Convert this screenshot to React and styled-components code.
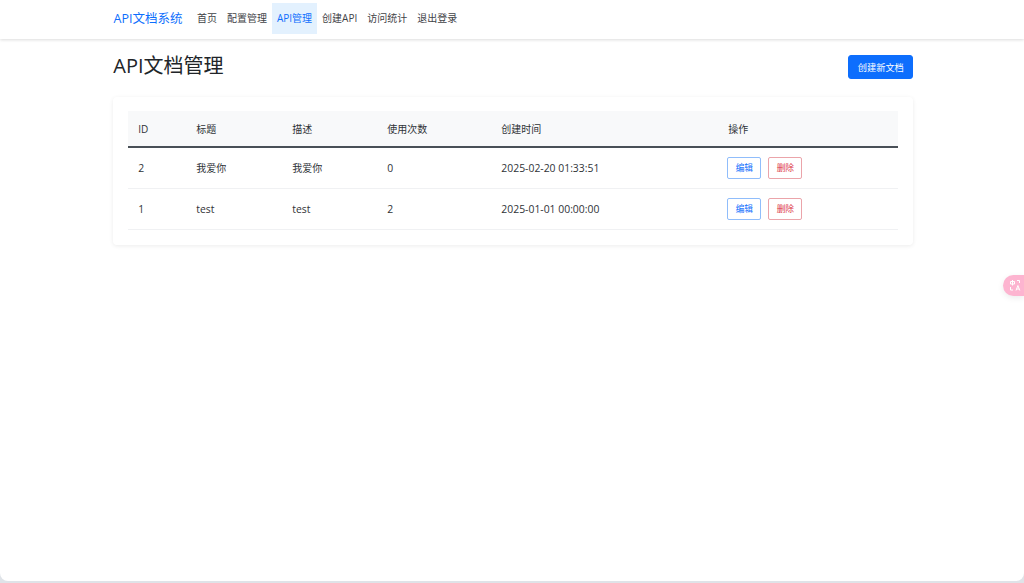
import React from "react";
import styled, { createGlobalStyle } from "styled-components";

const Global = createGlobalStyle`
  html, body { margin: 0; padding: 0; height: 100%; background: #dfe3e8; }
  body {
    font-family: "Open Sans", "Noto Sans CJK SC", sans-serif;
    font-size: 10px;
    color: #2f3337;
    overflow: hidden;
  }
  #root { height: 100%; }
`;

const Page = styled.div`
  position: relative;
  height: 581px;
  background: #fff;
  border-radius: 0 0 8px 8px;
  overflow: hidden;
`;

const NavBar = styled.nav`
  height: 39px;
  padding: 3px 0 0 113.5px;
  box-sizing: border-box;
  display: flex;
  align-items: flex-start;
  background: #fff;
  box-shadow: 0 1px 3px rgba(0, 0, 0, 0.14);
`;

const Brand = styled.a`
  font-size: 12.5px;
  line-height: 32px;
  color: #0d6efd;
  margin-right: 9.5px;
`;

const NavLink = styled.a`
  height: 31px;
  line-height: 31px;
  padding: 0 5px;
  color: ${(p) => (p.$active ? "#0d6efd" : "#3f4347")};
  background: ${(p) => (p.$active ? "#e3f1fe" : "transparent")};
`;

const Main = styled.main`
  width: 800px;
  margin-left: 113.33px;
`;

const Header = styled.div`
  display: flex;
  justify-content: space-between;
  align-items: flex-start;
  padding-top: 16px;
  height: 58px;
  box-sizing: border-box;
`;

const Title = styled.h1`
  margin: -3px 0 0;
  font-size: 20px;
  font-weight: 400;
  line-height: 28px;
  color: #212529;
`;

const PrimaryButton = styled.button`
  width: 65px;
  height: 24px;
  padding: 0;
  border: 1px solid #0d6efd;
  border-radius: 3px;
  background: #0d6efd;
  color: #fff;
  font: inherit;
  font-size: 9.2px;
`;

const Card = styled.section`
  height: 148px;
  box-sizing: border-box;
  padding: 14px 15px;
  border-radius: 4px;
  background: #fff;
  box-shadow: 0 1px 4px rgba(0, 0, 0, 0.08);
`;

const Table = styled.table`
  width: 770px;
  border-collapse: collapse;
  table-layout: fixed;
`;

const Th = styled.th`
  width: ${(p) => p.$w}px;
  height: 36px;
  padding: 0 10px;
  box-sizing: border-box;
  background: #f8f9fa;
  border-bottom: 2px solid #495057;
  font-weight: 400;
  text-align: left;
`;

const Td = styled.td`
  height: 41px;
  padding: 0 10px;
  box-sizing: border-box;
  border-bottom: 1px solid #f0f1f3;
  font-size: ${(p) => (p.$cjk ? "10px" : "10.4px")};
`;

const Actions = styled.div`
  display: flex;
  gap: 7px;
  margin-left: -1px;
`;

const SmallButton = styled.button`
  width: 34px;
  height: 22px;
  padding: 0;
  background: #fff;
  border: 1px solid ${(p) => (p.$danger ? "#eba4aa" : "#90bdfb")};
  border-radius: 2px;
  color: ${(p) => (p.$danger ? "#dc3545" : "#0d6efd")};
  font: inherit;
  font-size: 8.7px;
`;

const Translate = styled.div`
  position: absolute;
  right: 0;
  top: 275px;
  width: 21px;
  height: 21px;
  display: flex;
  align-items: center;
  padding-left: 7px;
  box-sizing: border-box;
  background: #fdb4d0;
  border-radius: 10.5px 0 0 10.5px;
  box-shadow: 0 2px 6px rgba(0, 0, 0, 0.08);
`;

const rows = [
  ["2", "我爱你", "我爱你", "0", "2025-02-20 01:33:51"],
  ["1", "test", "test", "2", "2025-01-01 00:00:00"],
];

const columns = [
  ["ID", 58],
  ["标题", 96],
  ["描述", 95],
  ["使用次数", 114],
  ["创建时间", 227],
  ["操作", 180],
];

export default function App() {
  return (
    <Page>
      <Global />
      <NavBar>
        <Brand>API文档系统</Brand>
        <NavLink>首页</NavLink>
        <NavLink>配置管理</NavLink>
        <NavLink $active>API管理</NavLink>
        <NavLink>创建API</NavLink>
        <NavLink>访问统计</NavLink>
        <NavLink>退出登录</NavLink>
      </NavBar>
      <Main>
        <Header>
          <Title>API文档管理</Title>
          <PrimaryButton>创建新文档</PrimaryButton>
        </Header>
        <Card>
          <Table>
            <thead>
              <tr>
                {columns.map(([label, w]) => (
                  <Th key={label} $w={w}>{label}</Th>
                ))}
              </tr>
            </thead>
            <tbody>
              {rows.map((row) => (
                <tr key={row[0]}>
                  {row.map((cell, i) => (
                    <Td key={i} $cjk={/[\u4e00-\u9fff]/.test(cell)}>{cell}</Td>
                  ))}
                  <Td>
                    <Actions>
                      <SmallButton>编辑</SmallButton>
                      <SmallButton $danger>删除</SmallButton>
                    </Actions>
                  </Td>
                </tr>
              ))}
            </tbody>
          </Table>
        </Card>
      </Main>
      <Translate>
        <svg width="11" height="11" viewBox="0 0 11 11" fill="none" stroke="#fff" strokeWidth="1">
          <path d="M0.5 1.5h4v2.5h-4zM2.5 0v5.5" />
          <path d="M6 10.5l1.9-5 1.9 5M6.6 9h2.6" />
          <path d="M7 0.5h2.5v2.5M0.5 7v3h2.5" />
        </svg>
      </Translate>
    </Page>
  );
}
